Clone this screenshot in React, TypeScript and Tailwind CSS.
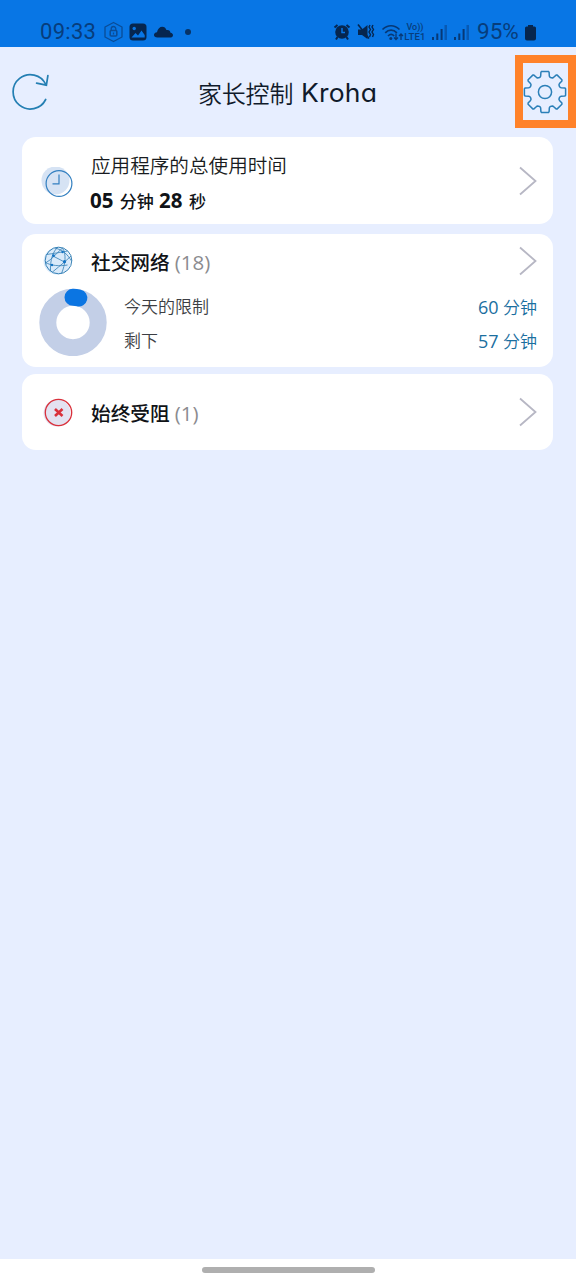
import type { ReactNode } from "react";

const latin = "font-['Open_Sans','Noto_Sans_CJK_SC',sans-serif]";

function StatusBar() {
    return (
        <header className="flex h-[47px] shrink-0 items-end bg-[#0876e5] pb-[3px] pl-[40px] pr-[39px] font-['Roboto',sans-serif] text-[#073d7c]">
            <span className="w-[57px] whitespace-nowrap text-[22px] leading-[25px] tracking-[0.3px]">09:33</span>
            <svg className="ml-[6px] mb-px" width="21" height="22" viewBox="0 0 21 22" fill="none" stroke="#0a4c96" strokeWidth="1.3">
                <path d="M10.5 1.5 19 6v10l-8.500 4.500L2 16V6Z" strokeLinejoin="round" />
                <rect x="7.200" y="9.500" width="6.600" height="5.500" rx="1" strokeWidth="1.600" />
                <path d="M8.200 9.500V7.800a2.300 2.300 0 0 1 4.600 0v1.700M10.500 11.500v2" />
            </svg>
            <svg className="ml-[5px] mb-[3px]" width="18" height="18" viewBox="0 0 18 18">
                <rect x="0.500" y="0.500" width="17" height="17" rx="3.500" fill="#06264f" />
                <circle cx="5.200" cy="5.500" r="1.700" fill="#0876e5" />
                <path d="m2.500 14.500 4-4.500 2.500 2.500 3.500-5 3.200 4.500v2.500Z" fill="#0876e5" />
            </svg>
            <svg className="ml-[6px] mb-[6px]" width="21" height="12" viewBox="0 0 21 12" fill="#06264f">
                <path d="M4.500 11.500C0 11.500-.2 6.800 4 6.300 5-.5 12-1 13.500 4c2.500-.5 3.800 1 4 2.800 3.500.4 3 4.700.3 4.700Z" />
            </svg>
            <span className="ml-[11px] mb-[9px] size-[6px] rounded-full bg-[#073366]" />
            <div className="ml-auto flex items-end">
                <svg className="mb-[3px]" width="18" height="18" viewBox="0 0 18 18" fill="none" stroke="#06264f">
                    <circle cx="9" cy="9" r="6.800" fill="#06264f" stroke="none" />
                    <path d="m1.500 4.500 3-2.500M16.500 4.500l-3-2.500M4.500 14 3 16.500M13.500 14l1.500 2.500" strokeWidth="2" />
                    <path d="M9 5v4.500h3" stroke="#0876e5" strokeWidth="1.500" />
                </svg>
                <svg className="ml-[6px] mb-[3px]" width="18" height="18" viewBox="0 0 18 18" fill="#06264f">
                    <path d="M1 6.500h4L10.500 2v14L5 12H1Z" />
                    <path d="m1 1.500 11 14" fill="none" stroke="#06264f" strokeWidth="1.600" />
                    <path d="m13 2-1 2 1.500 2.500L12 9l1.500 2.500-1 2.500M16 2l-1 2 1.500 2.500L15 9l1.500 2.500-1 2.500" fill="none" stroke="#06264f" strokeWidth="1.400" />
                </svg>
                <svg className="ml-[6px] mb-[2px]" width="23" height="19" viewBox="0 0 23 19" fill="none" stroke="#073875" strokeWidth="1.700">
                    <path d="M1.500 6.500c5-5 12-5 17 0M4.200 9.800c3.500-3.600 8.200-3.600 11.700 0M7 13c2-2 4.200-2 6.200 0" />
                    <circle cx="9.800" cy="15.500" r="1.500" fill="#073875" stroke="none" />
                    <path d="M15 10.500v6m-2-2 2 2 2-2M20 17v-6m-2 2 2-2 2 2" strokeWidth="1.300" />
                </svg>
                <div className="mb-[2px] flex w-[22px] flex-col items-center font-medium">
                    <span className="text-[9px] leading-[10px]">Vo))</span>
                    <span className="text-[9.500px] leading-[10px] tracking-[0.2px]">LTE1</span>
                </div>
                <Signal />
                <Signal />
                <span className="ml-[7px] w-[44px] whitespace-nowrap text-[22.5px] leading-[25px]">95%</span>
                <svg className="ml-[3px] mb-[3px]" width="13" height="17" viewBox="0 0 13 17" fill="#06264f">
                    <path d="M4 1h5v1.500h1.500q1.500 0 1.500 1.500v10.500q0 2-2 2H3q-2 0-2-2V4q0-1.500 1.500-1.500H4Z" />
                </svg>
            </div>
        </header>
    );
}

function Signal() {
    return (
        <svg className="ml-[6px] mb-[3px]" width="16" height="17" viewBox="0 0 16 17" fill="#073875">
            <path d="M0 13h2v3H0zM4.300 9.500h2V16h-2zM8.600 5h2v11h-2z" />
            <path d="M12.500 1H15v15h-2.500z" opacity=".45" />
        </svg>
    );
}

// Eight identical teeth around the origin
function gearPath() {
    const tooth = [
        [-5.5, -14.5], [-4.6, -15.2], [-4.3, -16.2], [-4.1, -19.8], [-3.3, -20.6],
        [3.3, -20.6], [4.1, -19.8], [4.3, -16.2], [4.6, -15.2], [5.5, -14.5],
    ];
    const points: string[] = [];
    for (let i = 0; i < 8; i++) {
        const a = (i * Math.PI) / 4;
        for (const [x, y] of tooth) {
            points.push(`${(x * Math.cos(a) - y * Math.sin(a)).toFixed(2)} ${(x * Math.sin(a) + y * Math.cos(a)).toFixed(2)}`);
        }
    }
    return `M${points.join("L")}Z`;
}

function TitleBar() {
    return (
        <div className="flex h-[90px] shrink-0 items-start">
            <svg className="mt-[23px] ml-[12px] shrink-0" width="41" height="43" viewBox="0 0 41 43" fill="none" stroke="#247fb3" strokeWidth="1.700">
                <path d="M33.700 29.500A17.200 17.200 0 1 1 33.800 14.400" strokeLinecap="round" />
                <path d="m24.600 13.200 9.800 2 1.500-9.700" strokeLinecap="round" />
            </svg>
            <h1 className="mt-[28px] ml-[145px] flex grow items-center whitespace-pre text-[24px] leading-[36px] text-[#101a2b]">
                <span className="w-[103px] font-['Noto_Sans_CJK_SC',sans-serif] font-[350] tracking-[-0.2px]">家长控制</span>
                <span className="origin-left scale-x-[1.06] font-['Inter',sans-serif] text-[25px] font-normal tracking-[0.2px] [font-feature-settings:'cv11']">Kroha</span>
            </h1>
            <button className="mt-[8px] flex h-[73px] w-[61px] shrink-0 items-center justify-center border-8 border-[#ff822a]">
                <svg className="mr-[2px] shrink-0" width="44" height="44" viewBox="-22 -22 44 44" fill="none" stroke="#2b7fb8" strokeWidth="1.500" strokeLinejoin="round">
                    <path d={gearPath()} />
                    <circle r="6.600" />
                </svg>
            </button>
        </div>
    );
}

function Chevron({ className = "" }: { className?: string }) {
    return (
        <svg className={`shrink-0 ${className}`} width="18" height="30" viewBox="0 0 18 30" fill="none" stroke="#b7b7c4" strokeWidth="1.800">
            <path d="M1 1.500 16.500 15 1 28.500" />
        </svg>
    );
}

function ClockIcon() {
    return (
        <svg width="34" height="34" viewBox="0 0 34 34" fill="none" stroke="#327fc0" strokeWidth="1.200">
            <circle cx="15.500" cy="13.500" r="14" fill="#d6e3f4" stroke="none" />
            <circle cx="19" cy="16.500" r="12.900" />
            <path d="M19 7.500v9.300h-6.500" />
        </svg>
    );
}

function GlobeIcon() {
    return (
        <svg className="-mt-[3px] ml-px" width="34" height="34" viewBox="0 0 34 34" fill="none" stroke="#337fb5" strokeWidth="1">
            <circle cx="16" cy="18" r="13.500" fill="#d9eafa" stroke="none" />
            <circle cx="17.500" cy="17.500" r="13.300" />
            <path d="M17 4.200C12 8 9 17 9.500 28M14 5c8 2 13 7 16.500 13M5.500 11.500c7-1 13-2 21-3.500M4.500 20c7-4 10-9 17-15M11 12.500l12.500 6.500M4.500 19.500c5 3 14 4 22 2.500M23.500 19c-4 3-8 7-12 10M21.500 5c4 6 3 16-1 25.500M23.500 19l6.500-6" strokeWidth="0.8" />
            <g fill="#1474c4" stroke="none">
                <circle cx="12.500" cy="12.700" r="1.400" />
                <circle cx="21.500" cy="9" r="1.200" />
                <circle cx="23.500" cy="18.700" r="1.600" />
                <circle cx="11" cy="22" r="1.200" />
            </g>
        </svg>
    );
}

function BlockedIcon() {
    return (
        <svg className="-mt-[2px] ml-px" width="34" height="34" viewBox="0 0 34 34" fill="none" stroke="#d9303b">
            <circle cx="16" cy="18" r="13.500" fill="#e3e2f1" stroke="none" />
            <circle cx="17.500" cy="17.500" r="13.200" strokeWidth="1.300" />
            <path d="m14 14 7.500 7M21.500 14 14 21" strokeWidth="2.600" />
        </svg>
    );
}

function Row({ icon, children, chevron }: { icon: ReactNode; children: ReactNode; chevron?: string }) {
    return (
        <div className="flex items-center">
            <div className="w-[50px] shrink-0">{icon}</div>
            <div className="grow">{children}</div>
            <Chevron className={chevron} />
        </div>
    );
}

function GroupTitle({ name, count }: { name: string; count: number }) {
    return (
        <h2 className="mt-[2px] ml-px whitespace-nowrap text-[19.7px] leading-[30px] text-[#8b8b8f]">
            <span className="mr-[5px] font-medium text-[#101317]">{name}</span>
            <span className="text-[20.5px]">({count})</span>
        </h2>
    );
}

function Limit({ label, value }: { label: string; value: number }) {
    return (
        <div className="flex justify-between text-[17px] font-[350] leading-[32.500px]">
            <span className="text-[#3c3e43]">{label}</span>
            <span className="text-[#1b6f9f]"><span className="text-[18px] font-normal">{value}</span> 分钟</span>
        </div>
    );
}

export default function App() {
    return (
        <div className={`flex h-[1280px] w-[576px] flex-col overflow-hidden bg-[#e7eeff] ${latin}`}>
            <StatusBar />
            <TitleBar />
            <main className="ml-[22px] w-[531px] grow">
                <section className="h-[87px] rounded-[14px] bg-white pl-[18px] pr-[16px] pt-[11.500px]">
                    <Row icon={<ClockIcon />} chevron="-mt-[5px]">
                        <p className="ml-px text-[19.6px] font-[350] leading-[34px] text-[#181b20]">应用程序的总使用时间</p>
                        <p className="whitespace-nowrap text-[20.5px] font-bold leading-[34px] text-[#101317]">
                            05 <span className="ml-px text-[17px] font-medium">分钟</span> 28 <span className="ml-px text-[17px] font-medium">秒</span>
                        </p>
                    </Row>
                </section>
                <section className="mt-[10px] h-[133px] rounded-[14px] bg-white pl-[18px] pr-[16px] pt-[11px]">
                    <Row icon={<GlobeIcon />} chevron="-mt-[2px]">
                        <GroupTitle name="社交网络" count={18} />
                    </Row>
                    <div className="flex">
                        <svg className="-ml-px mt-[10px] shrink-0" width="68" height="68" viewBox="0 0 68 68" fill="none" strokeWidth="17">
                            <circle cx="34" cy="34.500" r="25.200" stroke="#c3cfe7" />
                            <path d="M34 9.300a25.200 25.200 0 0 1 5.800.7" stroke="#0b75e2" strokeLinecap="round" />
                        </svg>
                        <div className="ml-[17px] mt-[13px] grow">
                            <Limit label="今天的限制" value={60} />
                            <Limit label="剩下" value={57} />
                        </div>
                    </div>
                </section>
                <section className="mt-[7px] h-[76px] rounded-[14px] bg-white pl-[18px] pr-[16px] pt-[22px]">
                    <Row icon={<BlockedIcon />} chevron="-mt-px">
                        <GroupTitle name="始终受阻" count={1} />
                    </Row>
                </section>
            </main>
            <footer className="flex h-[21px] shrink-0 justify-center bg-white">
                <div className="mt-[8px] h-[6px] w-[173px] rounded-full bg-[#afafaf]" />
            </footer>
        </div>
    );
}
